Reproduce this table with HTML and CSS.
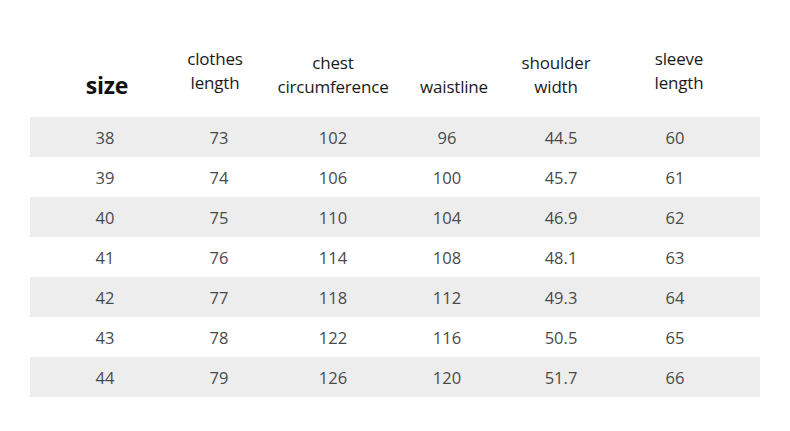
FILE: index.html
```html
<!DOCTYPE html>
<html>
<head>
<meta charset="utf-8">
<link rel="stylesheet" href="styles.css">
</head>
<body>
<div class="chart">
  <div class="head">
    <div class="hcell size">size</div>
    <div class="hcell up clothes">clothes<br>length</div>
    <div class="hcell chest">chest<br>circumference</div>
    <div class="hcell waist">waistline</div>
    <div class="hcell shoulder">shoulder<br>width</div>
    <div class="hcell up sleeve">sleeve<br>length</div>
  </div>
  <div class="row gray"><span>38</span><span>73</span><span>102</span><span>96</span><span>44.5</span><span>60</span></div>
  <div class="row"><span>39</span><span>74</span><span>106</span><span>100</span><span>45.7</span><span>61</span></div>
  <div class="row gray"><span>40</span><span>75</span><span>110</span><span>104</span><span>46.9</span><span>62</span></div>
  <div class="row"><span>41</span><span>76</span><span>114</span><span>108</span><span>48.1</span><span>63</span></div>
  <div class="row gray"><span>42</span><span>77</span><span>118</span><span>112</span><span>49.3</span><span>64</span></div>
  <div class="row"><span>43</span><span>78</span><span>122</span><span>116</span><span>50.5</span><span>65</span></div>
  <div class="row gray"><span>44</span><span>79</span><span>126</span><span>120</span><span>51.7</span><span>66</span></div>
</div>
</body>
</html>
```
FILE: styles.css
```css
html, body {
  margin: 0;
  padding: 0;
  background: #fff;
}
.chart {
  width: 730px;
  margin-left: 30px;
  font-family: "Open Sans", "Noto Sans", sans-serif;
}
.head, .row {
  display: grid;
  grid-template-columns: 18px repeat(6, 114px);
}
.head::before, .row::before {
  content: "";
}
.head {
  height: 117px;
  align-items: end;
}
.hcell {
  text-align: center;
  font-size: 17px;
  line-height: 24px;
  color: #1a1a1a;
  padding-bottom: 18px;
  letter-spacing: -0.2px;
  white-space: nowrap;
}
.hcell.up {
  padding-bottom: 22px;
}
.hcell.size {
  font-size: 23px;
  font-weight: 700;
  padding-bottom: 20px;
  padding-left: 4px;
  color: #111;
}
.hcell.clothes {
  padding-right: 8px;
}
.hcell.waist {
  padding-left: 14px;
}
.hcell.shoulder {
  padding-right: 10px;
}
.hcell.sleeve {
  padding-left: 8px;
}
.row {
  height: 40px;
  align-items: center;
  font-size: 16.5px;
  color: #4a4a4a;
}
.row span {
  text-align: center;
}
.row.gray {
  background: #ededed;
}
```
